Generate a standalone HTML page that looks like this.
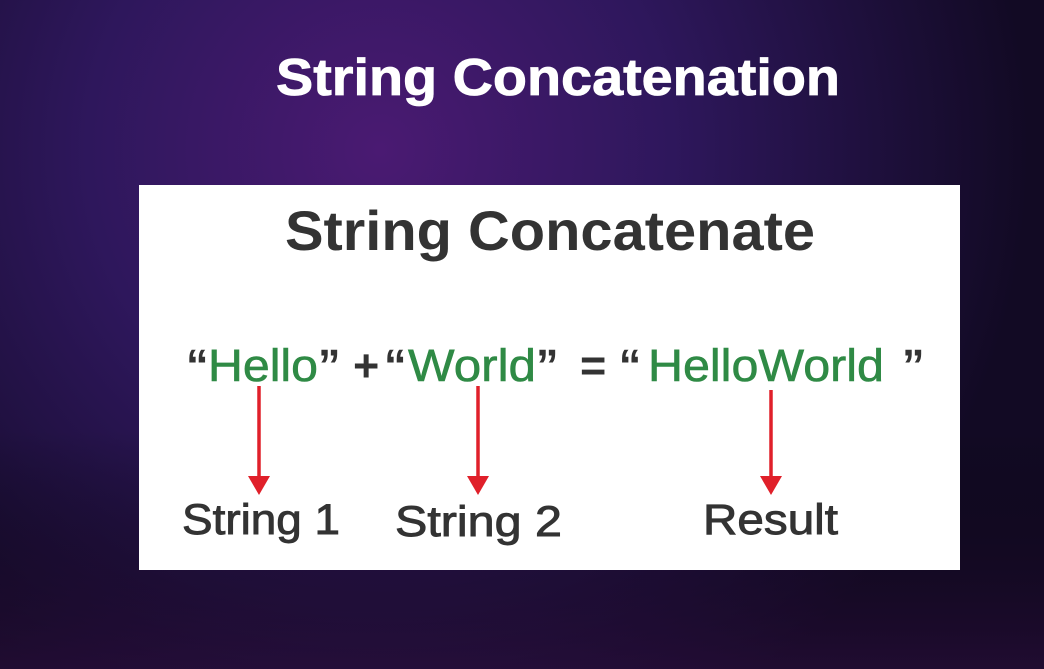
<!DOCTYPE html>
<html><head><style>
html,body{margin:0;padding:0;width:1044px;height:669px;overflow:hidden;background:#1a0d35}
</style></head><body>
<svg width="1044" height="669" xmlns="http://www.w3.org/2000/svg" style="display:block">
<defs>
<radialGradient id="g" cx="380" cy="150" r="650" gradientUnits="userSpaceOnUse">
<stop offset="0" stop-color="#4a1a72"/>
<stop offset="0.45" stop-color="#2e175c"/>
<stop offset="1" stop-color="#120a24"/>
</radialGradient>
<linearGradient id="b" x1="0" y1="0" x2="0" y2="1">
<stop offset="0" stop-color="#000" stop-opacity="0"/>
<stop offset="1" stop-color="#2a0d3a" stop-opacity="0.6"/>
</linearGradient>
</defs>
<rect width="1044" height="669" fill="url(#g)"/>
<rect y="430" width="1044" height="239" fill="url(#b)"/>
<text x="276" y="95" font-family="Liberation Sans, sans-serif" font-weight="bold" font-size="52" fill="#fff" stroke="#fff" stroke-width="0.8" textLength="564" lengthAdjust="spacingAndGlyphs">String Concatenation</text>
<rect x="139" y="185" width="821" height="385" fill="#fff"/>
<text x="285" y="250" font-family="Liberation Sans, sans-serif" font-weight="bold" font-size="56" fill="#333" textLength="530" lengthAdjust="spacingAndGlyphs">String Concatenate</text>
<g font-family="Liberation Sans, sans-serif" font-size="45">
<text x="186" y="381" fill="#333" font-weight="bold">“</text>
<text x="208" y="381" fill="#2f8a45" stroke="#2f8a45" stroke-width="0.6" textLength="110" lengthAdjust="spacingAndGlyphs">Hello</text>
<text x="318" y="381" fill="#333" font-weight="bold">” +</text>
<text x="384" y="381" fill="#333" font-weight="bold">“</text>
<text x="408" y="381" fill="#2f8a45" stroke="#2f8a45" stroke-width="0.6" textLength="128" lengthAdjust="spacingAndGlyphs">World</text>
<text x="536" y="381" fill="#333" font-weight="bold">”</text>
<text x="580" y="381" fill="#333" font-weight="bold">= “</text>
<text x="648" y="381" fill="#2f8a45" stroke="#2f8a45" stroke-width="0.6" textLength="236" lengthAdjust="spacingAndGlyphs">HelloWorld</text>
<text x="902" y="381" fill="#333" font-weight="bold">”</text>
</g>
<g stroke="#e0202a" stroke-width="3.5">
<line x1="259" y1="386" x2="259" y2="480"/>
<line x1="478" y1="386" x2="478" y2="480"/>
<line x1="771" y1="390" x2="771" y2="480"/>
</g>
<g fill="#e0202a">
<polygon points="248,476 270,476 259,495"/>
<polygon points="467,476 489,476 478,495"/>
<polygon points="760,476 782,476 771,495"/>
</g>
<g font-family="Liberation Sans, sans-serif" font-size="43" fill="#333" stroke="#333" stroke-width="0.9">
<text x="182" y="534" textLength="158" lengthAdjust="spacingAndGlyphs">String 1</text>
<text x="395" y="536" textLength="167" lengthAdjust="spacingAndGlyphs">String 2</text>
<text x="703" y="534" textLength="135" lengthAdjust="spacingAndGlyphs">Result</text>
</g>
</svg>
</body></html>
